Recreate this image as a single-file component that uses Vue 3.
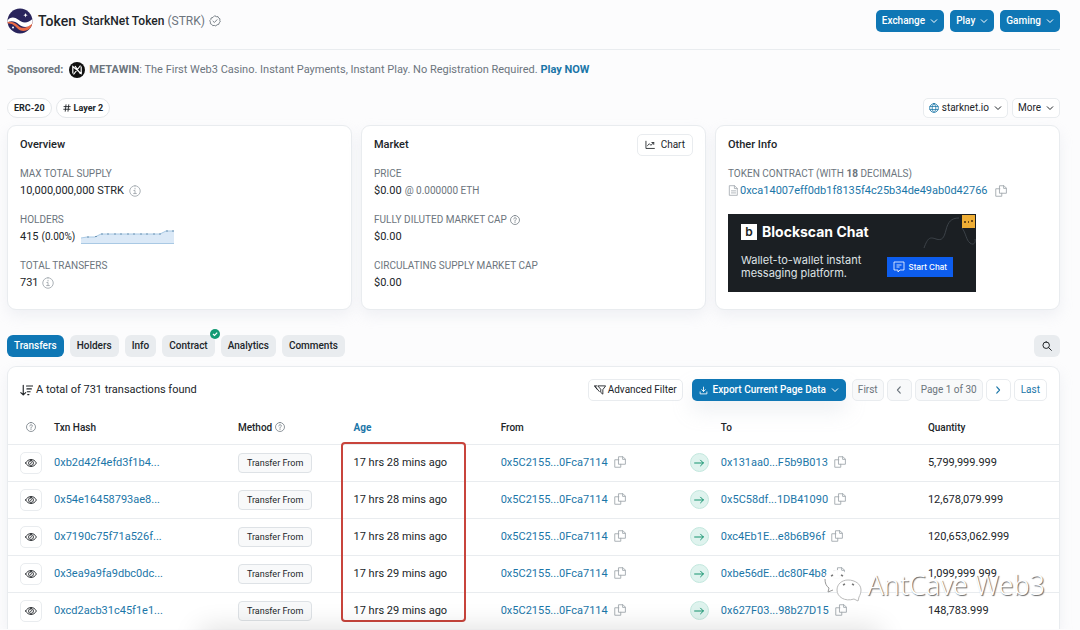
<script setup>
import { h } from 'vue'

const strokes = {
  chevron: ['M2.500 5.500l5.500 5.500 5.500-5.500'],
  left: ['M10 3L5.500 8l4.500 5'],
  right: ['M6 3l4.500 5L6 13'],
  info: ['M8 1a7 7 0 1 0 0 14a7 7 0 1 0 0-14z', 'M6.500 7.300H8v4M6.200 11.400h3.600M8 4.300v1'],
  help: ['M8 .8a7.200 7.200 0 1 0 0 14.400a7.200 7.200 0 1 0 0-14.400z', 'M6 6.300c0-2.700 4.200-2.500 4.200-.1 0 1.500-2.200 1.500-2.200 3M8 11v1'],
  verified: ['M8 1.200l1.800 1 2.100-.1.900 1.900 1.800 1.100-.2 2.100.6 2-1.500 1.400-.6 2-2.100.4L9 14.500l-2-.6-2.100.3-1.200-1.700-1.900-.9.100-2.100L1 7.600l1.400-1.500.4-2.100 2-.6z', 'M5.300 8.200l1.900 1.800 3.500-3.700'],
  copy: ['M6.500 1h5.500l3.200 3.200v6.800H6.500z', 'M11.500 1v3.500h3.500', 'M6.500 5H1v10h8v-4'],
  file: ['M2.500 1h7l4 4v10h-11z', 'M9.300 1v4.200h4.200M5 8.500h6M5 11.500h6'],
  chart: ['M1.500 2v11.500h13.500', 'M4 9l3-3 2.500 2.500L14 4M11 4h3v3'],
  globe: ['M8 1a7 7 0 1 0 0 14a7 7 0 1 0 0-14z', 'M8 1c-4 3.500-4 10.500 0 14c4-3.500 4-10.500 0-14zM1.500 5.500h13M1.500 10.500h13'],
  search: ['M6.700 1.500a5.200 5.200 0 1 0 0 10.400a5.200 5.200 0 1 0 0-10.400z', 'M10.500 10.500l4.500 4.500'],
  eye: ['M.8 8c3.400-6.400 11-6.400 14.400 0c-3.400 6.400-11 6.400-14.400 0z', 'M8 4.700a3.300 3.300 0 1 0 0 6.600a3.300 3.300 0 1 0 0-6.600z', 'M8 6.200c1 .6 1 2.600-.5 2.700'],
  sort: ['M4 1.500v12M1 10.500l3 3 3-3', 'M8 2.500h7.500M8.500 6h5.500M9 9.500h3.500M9.500 13h1.500'],
  filter: ['M5.500 2.500h10l-3.700 5v6L9 11.200V7.500z', 'M3.500 2.500H.8l3.200 4.500M.8 2.500L7 10'],
  download: ['M8 2v7.500M4.800 6.500L8 9.700l3.200-3.200', 'M2 10.500v3.500h12v-3.500'],
  hash: ['M6 1.500l-1.500 13M11.500 1.500l-1.500 13M2 5.200h12.500M1.500 10.500H14'],
  arrow: ['M1 8h14M10.500 3.500L15 8l-4.500 4.500']
}

const Icon = (props) =>
  h('svg', { viewBox: '0 0 16 16', fill: 'none', stroke: 'currentColor', 'stroke-width': props.w || 1.2, 'stroke-linecap': 'round', 'stroke-linejoin': 'round', 'aria-hidden': 'true' },
    strokes[props.name].map((d) => h('path', { d })))
Icon.props = ['name', 'w']

const menus = ['Exchange', 'Play', 'Gaming']
const tabs = ['Transfers', 'Holders', 'Info', 'Contract', 'Analytics', 'Comments']
const rows = [
  { hash: '0xb2d42f4efd3f1b4...', age: '17 hrs 28 mins ago', to: '0x131aa0...F5b9B013', qty: '5,799,999.999' },
  { hash: '0x54e16458793ae8...', age: '17 hrs 28 mins ago', to: '0x5C58df...1DB41090', qty: '12,678,079.999' },
  { hash: '0x7190c75f71a526f...', age: '17 hrs 28 mins ago', to: '0xc4Eb1E...e8b6B96f', qty: '120,653,062.999' },
  { hash: '0x3ea9a9fa9dbc0dc...', age: '17 hrs 29 mins ago', to: '0xbe56dE...dc80F4b8', qty: '1,099,999.999' },
  { hash: '0xcd2acb31c45f1e1...', age: '17 hrs 29 mins ago', to: '0x627F03...98b27D15', qty: '148,783.999' }
]
</script>

<template>
  <main class="page">
    <header class="head">
      <svg class="logo" viewBox="0 0 26 26" aria-hidden="true">
        <defs><clipPath id="disc"><circle cx="13" cy="13" r="12.500" /></clipPath></defs>
        <g clip-path="url(#disc)">
          <rect width="26" height="26" fill="#29245c" />
          <path d="M0 13.500C4 13 8 14.500 11 17.500S20 22 26 13v4c-4 7-12 7.500-16 3S3 15.500 0 15.500z" fill="#ea6a45" />
          <path d="M0 13c3-4.500 7.500-4.500 11-1.500S20 16.500 26 10.500v4C22 20 16 20 12 16.500S4 12.500 0 14.500z" fill="#fff" />
        </g>
        <path d="M18.500 5l.6 1.600 1.600.6-1.600.6-.6 1.600-.6-1.600-1.600-.6 1.600-.6z" fill="#fff" />
        <circle cx="6" cy="19.500" r="1" fill="#fff" />
      </svg>
      <h1>Token</h1>
      <strong class="name">StarkNet Token <span>(STRK)</span></strong>
      <Icon name="verified" class="i12 gray" />
      <nav class="menus">
        <button v-for="m in menus" :key="m" class="btn blue">{{ m }}<Icon name="chevron" class="i8" w="2" /></button>
      </nav>
    </header>

    <p class="sponsor">
      <b>Sponsored:</b>
      <svg class="meta" viewBox="0 0 16 16" aria-hidden="true">
        <circle cx="8" cy="8" r="8" fill="#111" />
        <path d="M3.800 11.500v-7l8.400 7v-7M4.500 12.500l7-9M6 4l5.500 8" fill="none" stroke="#fff" stroke-width="1.200" />
      </svg>
      <span><b>METAWIN</b>: The First Web3 Casino. Instant Payments, Instant Play. No Registration Required. <a href="#"><b>Play NOW</b></a></span>
    </p>

    <div class="tags">
      <span class="tag">ERC-20</span>
      <span class="tag"><Icon name="hash" class="i8" w="1.800" />Layer 2</span>
      <span class="spring"></span>
      <button class="btn light"><Icon name="globe" class="i10 sky" w="1.300" />starknet.io<Icon name="chevron" class="i8 gapl" w="2" /></button>
      <button class="btn light">More<Icon name="chevron" class="i8 gapl" w="2" /></button>
    </div>

    <div class="cards">
      <section class="card">
        <h2>Overview</h2>
        <dl>
          <dt>MAX TOTAL SUPPLY</dt>
          <dd>10,000,000,000 STRK <Icon name="info" class="i12 pale infoicon" w="1.200" /></dd>
          <dt>HOLDERS</dt>
          <dd>415 <small>(0.00%)</small>
            <svg class="spark" viewBox="0 0 93 14" aria-hidden="true">
              <path d="M0 8l6-1h8l6-3h59l6-3h8v12H0z" fill="#dbe9f7" />
              <path d="M0 8l6-1h8l6-3h59l6-3h8" fill="none" stroke="#a9c9e4" />
              <path d="M6 7h2M14 6.500h2M20 4h2M26 4h2M33 4h2M39 4h2M46 4h2M52 4h2M59 4h2M65 4h2M72 4h2M78 4h2M85 1h2M91 1h2" stroke="#6f96b5" />
              <path d="M0 13.500h93" stroke="#a9c9e4" />
            </svg>
          </dd>
          <dt>TOTAL TRANSFERS</dt>
          <dd>731 <Icon name="info" class="i12 pale" w="1.200" /></dd>
        </dl>
      </section>
      <section class="card">
        <div class="cardhead"><h2>Market</h2><button class="btn light chart"><Icon name="chart" class="i10" w="1.400" />Chart</button></div>
        <dl>
          <dt>PRICE</dt>
          <dd>$0.00 <small class="gray">@ 0.000000 ETH</small></dd>
          <dt><span>FULLY DILUTED MARKET CAP</span><Icon name="help" class="i10" /></dt>
          <dd>$0.00</dd>
          <dt>CIRCULATING SUPPLY MARKET CAP</dt>
          <dd>$0.00</dd>
        </dl>
      </section>
      <section class="card">
        <h2>Other Info</h2>
        <dl>
          <dt><span>TOKEN CONTRACT (WITH <b>18</b> DECIMALS)</span></dt>
          <dd class="contract"><Icon name="file" class="i11 pale" /><a href="#">0xca14007eff0db1f8135f4c25b34de49ab0d42766</a><Icon name="copy" class="i12 pale" /></dd>
        </dl>
        <a class="ad" href="#">
          <svg class="squiggle" viewBox="0 0 54 40" aria-hidden="true">
            <path d="M2 34c4-11 6-11 12-9s8-1 10-9 5-12 13-12M40 14c4 5 4 12 8 15s6-1 5-4" fill="none" stroke="#3c4248" />
            <rect x="40" y="1" width="13" height="13" fill="#efae35" />
            <path d="M42 8h2M46 8h1M49 7h2" stroke="#6f4a17" stroke-width="2" />
          </svg>
          <span class="adtitle"><i>b</i>Blockscan Chat</span>
          <span class="adrow">
            <span>Wallet-to-wallet instant<br>messaging platform.</span>
            <span class="adbtn">
              <svg class="i12" viewBox="0 0 12 12" aria-hidden="true"><path d="M1 1h10v8H7L5 11V9H1zM3.500 4h5M3.500 6h3" fill="none" stroke="#fff" stroke-opacity=".8" /></svg>
              Start Chat
            </span>
          </span>
        </a>
      </section>
    </div>

    <nav class="tabs">
      <button v-for="(t, i) in tabs" :key="t" class="btn tab" :class="{ blue: i === 0 }">{{ t }}
        <svg v-if="t === 'Contract'" class="tick" viewBox="0 0 10 10" aria-hidden="true"><circle cx="5" cy="5" r="5" fill="#149a74" /><path d="M3 5l1.500 1.500L7.200 3.700" fill="none" stroke="#fff" stroke-width="1.200" /></svg>
      </button>
      <span class="spring"></span>
      <button class="btn tab find" aria-label="Search"><Icon name="search" class="i10" w="1.600" /></button>
    </nav>

    <section class="list">
      <div class="bar">
        <p><Icon name="sort" class="i13" w="1.400" />A total of 731 transactions found</p>
        <button class="btn light adv"><Icon name="filter" class="i12" w="1.200" />Advanced Filter</button>
        <button class="btn blue export"><Icon name="download" class="i9" w="1.500" />Export Current Page Data<Icon name="chevron" class="i8" w="2" /></button>
        <div class="pager">
          <button class="btn light off">First</button>
          <button class="btn light off step" aria-label="Previous"><Icon name="left" class="i10" w="1.800" /></button>
          <span class="btn light off">Page 1 of 30</span>
          <button class="btn light go step" aria-label="Next"><Icon name="right" class="i10" w="1.800" /></button>
          <button class="btn light go last">Last</button>
        </div>
      </div>
      <div class="tablewrap">
        <table>
          <colgroup><col class="c1"><col class="c2"><col class="c3"><col class="c4"><col class="c5"><col class="c6"><col class="c7"><col></colgroup>
          <thead>
            <tr>
              <th class="mid"><Icon name="help" class="i10 gray" /></th>
              <th>Txn Hash</th><th>Method <Icon name="help" class="i10 gray" /></th><th><a href="#">Age</a></th>
              <th>From</th><th></th><th>To</th><th>Quantity</th>
            </tr>
          </thead>
          <tbody>
            <tr v-for="r in rows" :key="r.hash">
              <td class="mid"><button class="btn light view" aria-label="View details"><Icon name="eye" class="i12" w="1.200" /></button></td>
              <td><a href="#">{{ r.hash }}</a></td>
              <td><span class="method">Transfer From</span></td>
              <td>{{ r.age }}</td>
              <td><a href="#">0x5C2155...0Fca7114</a><Icon name="copy" class="i12 pale copy" /></td>
              <td><span class="dir"><Icon name="arrow" class="i10" w="1.600" /></span></td>
              <td><a href="#">{{ r.to }}</a><Icon name="copy" class="i12 pale copy" /></td>
              <td>{{ r.qty }}</td>
            </tr>
          </tbody>
        </table>
        <div class="mark"></div>
        <div class="stamp">
          <svg viewBox="0 0 40 34" aria-hidden="true">
            <path d="M13 23c-2 0-4 0-6-1l-4 2 1-4C-3 14 2 2 14 2c7 0 12 4 13 9" fill="#fff" fill-opacity=".95" />
            <path d="M2 11c0 4 1 7 4 9l-1 4 5-2" fill="none" stroke="#999" />
            <path d="M36 29l-1 4-4-2c-9 3-17-2-17-9 0-6 5-10 11-10 7 0 13 4 13 10 0 3-1 5-2 7z" fill="#fff" fill-opacity=".95" stroke="#bbb" />
            <path d="M8 8l2-1M18 7l2 1M20 17l2-1M29 16l2 1" stroke="#777" stroke-width="1.500" />
          </svg>
          <span>AntCave Web3</span>
        </div>
      </div>
    </section>
    <div class="shade"></div>
  </main>
</template>

<style>
html { overflow: hidden; background: #fcfcfd; }
</style>

<style scoped>
* { box-sizing: border-box; }
.page { padding: 0 20px 0 7px; font: 11px/16px Roboto, "Liberation Sans", sans-serif; color: #212529; }
h1, h2, p, dl, dd { margin: 0; }
a { color: #1b76a8; text-decoration: none; }
svg { flex: none; }
.i8 { width: 8px; height: 8px; } .i9 { width: 9px; height: 9px; } .i10 { width: 10px; height: 10px; }
.i11 { width: 11px; height: 11px; } .i12 { width: 12px; height: 12px; } .i13 { width: 13px; height: 13px; }
.gray { color: #6c757d; } .pale { color: #a3a9af; } .sky { color: #1b76a8; }
.spring { flex: 1; }
.btn { display: inline-flex; align-items: center; justify-content: center; gap: 4px; height: 22px; padding: 0 7px; border: 0; border-radius: 5px; font: 500 10px/16px Roboto, "Liberation Sans", sans-serif; color: #212529; white-space: nowrap; }
.light { background: #fff; border: 1px solid #e9ecef; }
.blue { background: #0f77b5; color: #fff; }

.head { display: flex; align-items: center; height: 50px; padding-bottom: 8px; border-bottom: 1px solid #e9ecef; }
.logo { width: 26px; height: 26px; }
h1 { margin: 0 6px 0 5px; font-size: 14px; font-weight: 500; }
.name { margin-right: 4px; font-size: 12px; font-weight: 500; }
.name span { font-weight: 400; color: #6c757d; }
.menus { display: flex; gap: 6px; margin-left: auto; }
.menus .btn { gap: 5px; padding: 0 6px; }

.sponsor { display: flex; align-items: center; height: 40px; color: #6c757d; }
.meta { width: 16px; height: 16px; margin: 0 4px 0 6px; }

.tags { display: flex; align-items: center; gap: 4px; height: 20px; margin: 8px 0 7px; }
.tag { display: flex; align-items: center; gap: 3px; height: 20px; padding: 0 6px; background: #fff; border: 1px solid #e4e7ea; border-radius: 10px; font-size: 9px; font-weight: 700; }
.tags .btn { height: 20px; padding: 0 5px; font-weight: 400; gap: 3px; }
.tags .gapl { margin-left: 2px; }

.cards { display: grid; grid-template-columns: repeat(3, 1fr); gap: 9px; }
.card { min-height: 185px; padding: 11px 12px 17px; background: #fff; border: 1px solid #e9ecef; border-radius: 9px; box-shadow: 0 6px 14px rgba(189, 197, 209, .2); }
.cardhead { display: flex; justify-content: space-between; align-items: center; height: 16px; }
h2 { font-size: 11px; line-height: 16px; font-weight: 500; }
.chart { gap: 6px; font-weight: 400; }
dt { display: flex; align-items: center; gap: 3px; margin-top: 13px; line-height: 16px; font-size: 10px; color: #6c757d; white-space: nowrap; }
dd { display: flex; align-items: center; gap: 3px; height: 17px; white-space: nowrap; }
dd small { font-size: 10px; }
.infoicon { margin-left: 2px; }
.contract { gap: 1px; }
.contract a { margin-right: 6px; }
.spark { width: 93px; height: 14px; margin-left: 3px; }

.ad { position: relative; display: block; width: 248px; height: 78px; margin-top: 15px; padding: 8px 12px 8px 13px; background: #1b1f23; color: #dfe2e5; font-family: Inter, sans-serif; }
.squiggle { position: absolute; top: 0; right: 0; width: 54px; height: 40px; }
.adtitle { display: flex; align-items: center; gap: 5px; font-size: 14px; line-height: 20px; font-weight: 700; color: #fff; }
.adtitle i { width: 16px; height: 16px; background: #fff; color: #1b1f23; font-size: 12px; line-height: 16px; font-style: normal; font-weight: 600; text-align: center; }
.adrow { display: flex; align-items: center; justify-content: space-between; margin-top: 12px; padding-right: 11px; font-size: 11px; line-height: 13px; }
.adbtn { display: flex; align-items: center; gap: 3px; height: 20px; padding: 0 6px; background: #0d5dee; color: #fff; font-size: 8px; font-weight: 500; }

.tabs { display: flex; gap: 6px; margin: 25px 0 9px; }
.tab { position: relative; border-radius: 6px; }
.tab:not(.blue) { background: #e9ecef; }
.tick { position: absolute; top: -6px; right: -5px; width: 10px; height: 10px; }
.find { width: 26px; }

.list { background: #fff; border: 1px solid #e9ecef; border-bottom: 0; border-radius: 9px 9px 0 0; box-shadow: 0 6px 14px rgba(189, 197, 209, .2); }
.bar { display: flex; align-items: center; height: 46px; padding: 0 12px; }
.bar p { display: flex; align-items: center; gap: 3px; flex: 1; }
.adv { gap: 2px; font-weight: 400; margin-right: 9px; padding: 0 5px; }
.export { gap: 5px; margin-right: 6px; box-shadow: 0 10px 20px rgba(189, 197, 209, .25); }
.pager { display: flex; gap: 3px; }
.pager .btn { padding: 0 5px; font-weight: 400; }
.pager .last { padding: 0 6px; }
.pager .step { width: 25px; }
.off { background: #f8f9fa; color: #6c757d; }
.pager .go { color: #1b76a8; }

.tablewrap { position: relative; }
table { width: 100%; table-layout: fixed; border-collapse: collapse; }
.c1 { width: 46px; } .c2 { width: 17.5%; } .c3 { width: 11%; } .c4 { width: 14%; }
.c5 { width: 18%; } .c6 { width: 31px; } .c7 { width: 19.7%; }
th, td { height: 37px; padding: 0; border-bottom: 1px solid #e9ecef; text-align: left; vertical-align: middle; white-space: nowrap; }
tbody tr:last-child td { border-bottom: 0; }
th { height: 31px; font-size: 10px; font-weight: 500; }
th a { font-weight: 700; }
th svg { vertical-align: -1px; }
.mid { text-align: center; }
.copy { margin-left: 6px; vertical-align: -2px; }
.view { display: flex; width: 22px; height: 22px; margin: 0 auto; padding: 0; }
.method { display: flex; align-items: center; width: fit-content; height: 20px; padding: 0 8px; background: #f8f9fa; border: 1px solid #dee2e6; border-radius: 4px; font-size: 9px; }
.dir { display: flex; align-items: center; justify-content: center; width: 19px; height: 19px; background: #dff3ee; border: 1px solid #c3e8de; border-radius: 50%; color: #15936f; }

.mark { position: absolute; top: 29px; bottom: 7px; left: calc(31.5% + 2px); width: 125px; border: 2px solid #c8443c; border-radius: 4px; }
.stamp { position: absolute; right: 14px; bottom: 27px; display: flex; align-items: center; gap: 4px; font: 300 27px/34px "Noto Sans", sans-serif; color: #fff; text-shadow: 1px 1px 1px #666; }
.stamp svg { width: 40px; height: 34px; }
.shade { position: fixed; bottom: -20px; left: 200px; right: 200px; height: 20px; box-shadow: 0 0 28px rgba(0, 0, 0, .16); }
</style>
